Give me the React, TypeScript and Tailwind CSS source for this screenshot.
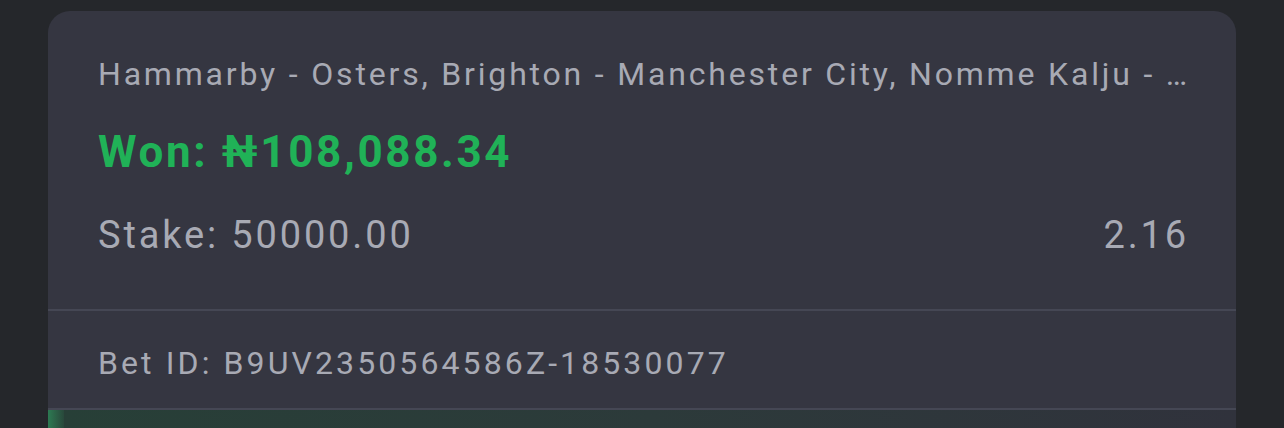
import React from 'react';

const font = { fontFamily: 'Roboto, "Noto Sans", sans-serif' };

function Divider() {
  return <div className="h-[2px] w-full bg-[#454754]" />;
}

export default function App() {
  return (
    <div className="h-[428px] w-[1284px] overflow-hidden bg-[#25272b] pt-[11px]" style={font}>
      <div className="mx-[48px] overflow-hidden rounded-t-[22px] bg-[#353641]">
        <div className="px-[50px] pt-[45px] pb-[52px]">
          <div className="whitespace-nowrap text-[32px] leading-[36px] tracking-[0.088em] text-[#a8aab4]">
            Hammarby - Osters, Brighton - Manchester City, Nomme Kalju - …
          </div>
          <div className="mt-[35px] text-[44px] font-bold leading-[50px] tracking-[0.06em] text-[#20b257]">
            Won: ₦108,088.34
          </div>
          <div className="mt-[36px] flex items-center justify-between text-[38px] leading-[44px] tracking-[0.075em] text-[#a8aab4]">
            <span>Stake: 50000.00</span>
            <span className="-mr-[3px]">2.16</span>
          </div>
        </div>
        <Divider />
        <div className="whitespace-nowrap px-[50px] pt-[34px] pb-[27px] text-[32px] leading-[36px] tracking-[0.097em] text-[#a8aab4]">
          Bet ID: B9UV2350564586Z-18530077
        </div>
        <Divider />
        <div className="flex h-[40px]">
          <div className="w-[16px] bg-gradient-to-r from-[#2c7a52] to-[#28483b]" />
          <div className="flex-1 bg-gradient-to-r from-[#273f37] via-[#2c3a3a] to-[#30323c]" />
        </div>
      </div>
    </div>
  );
}
